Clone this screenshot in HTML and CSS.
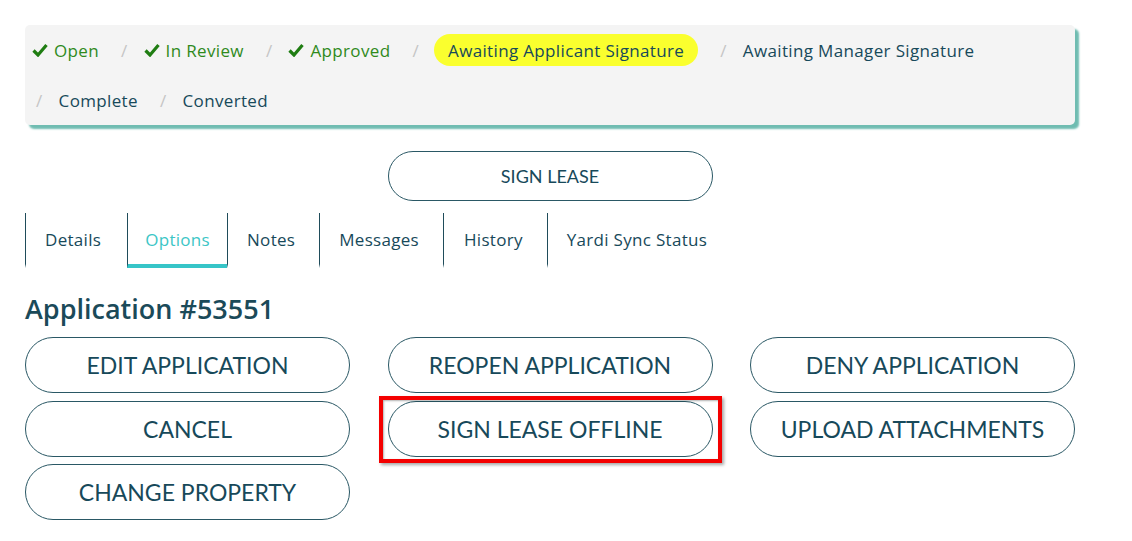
FILE: index.html
```html
<!DOCTYPE html>
<html>
<head>
<meta charset="utf-8">
<link rel="stylesheet" href="styles.css">
</head>
<body>
<div class="page">
  <ol class="steps">
    <li class="step done"><svg class="check" viewBox="0 0 16 14"><path d="M1.5 7.5 L6 12 L14.5 2" /></svg>Open</li>
    <li class="step done"><svg class="check" viewBox="0 0 16 14"><path d="M1.5 7.5 L6 12 L14.5 2" /></svg>In Review</li>
    <li class="step done"><svg class="check" viewBox="0 0 16 14"><path d="M1.5 7.5 L6 12 L14.5 2" /></svg>Approved</li>
    <li class="step current"><span class="pill">Awaiting Applicant Signature</span></li>
    <li class="step">Awaiting Manager Signature</li>
    <li class="step">Complete</li>
    <li class="step">Converted</li>
  </ol>

  <div class="lead-action">
    <button class="btn btn-small">SIGN LEASE</button>
  </div>

  <nav class="tabs">
    <a class="tab">Details</a>
    <a class="tab active">Options</a>
    <a class="tab">Notes</a>
    <a class="tab">Messages</a>
    <a class="tab">History</a>
    <a class="tab">Yardi Sync Status</a>
  </nav>

  <h1 class="title">Application #53551</h1>

  <div class="actions">
    <button class="btn">EDIT APPLICATION</button>
    <button class="btn">REOPEN APPLICATION</button>
    <button class="btn">DENY APPLICATION</button>
    <button class="btn">CANCEL</button>
    <button class="btn marked">SIGN LEASE OFFLINE</button>
    <button class="btn">UPLOAD ATTACHMENTS</button>
    <button class="btn">CHANGE PROPERTY</button>
  </div>
</div>
</body>
</html>
```

FILE: styles.css
```css
* { box-sizing: border-box; }
html, body { margin: 0; padding: 0; background: #fff; }
body {
  font-family: "Open Sans", "Lato", sans-serif;
  color: #17495a;
}
.page {
  width: 1050px;
  margin-left: 25px;
  padding-top: 25px;
}
.steps {
  list-style: none;
  margin: 0;
  padding: 0 7px 0 7px;
  background: #f4f4f4;
  border-radius: 5px;
  box-shadow: 4px 4px 2px #6fbcb1;
  display: flex;
  flex-wrap: wrap;
  align-items: center;
  height: 100px;
  font-size: 17px;
  letter-spacing: 0.35px;
}
.step {
  display: flex;
  align-items: center;
  height: 50px;
  color: #17495a;
}
.step + .step::before {
  content: "/";
  color: #c4c4c4;
  margin: 0 16px 0 22px;
}
.step:nth-child(6)::before { margin-left: 4px; }
.step.done { color: #2f8a1c; }
.check {
  width: 16px;
  height: 14px;
  margin-right: 6px;
  fill: none;
  stroke: #1f7d12;
  stroke-width: 3.2;
}
.pill {
  background: #faff2e;
  border-radius: 16px;
  padding: 0 14px;
  height: 32px;
  display: flex;
  align-items: center;
}
.current::before { margin-right: 15px !important; }

.lead-action {
  display: flex;
  justify-content: center;
  margin-top: 26px;
}
.btn {
  font-family: "Lato", "Open Sans", sans-serif;
  background: #fff;
  color: #17495a;
  border: 1px solid #2a5865;
  border-radius: 28px;
  height: 56px;
  font-size: 23px;
  cursor: pointer;
  padding: 0;
}
.btn-small {
  width: 325px;
  height: 50px;
  border-radius: 25px;
  font-size: 18px;
}

.tabs {
  display: flex;
  margin-top: 12px;
  height: 55px;
}
.tab {
  display: flex;
  align-items: center;
  padding: 1px 20px 0 19px;
  border-left: 1px solid #1f4c5a;
  font-size: 17px;
  letter-spacing: 0.3px;
  color: #17495a;
  border-bottom: 4px solid transparent;
}
.tab.active {
  color: #3cc6c6;
  border-bottom-color: #36c5c8;
  padding-left: 17px;
  padding-right: 17px;
}
.tab:nth-child(1) { padding-right: 26px; }
.tab:nth-child(3), .tab:nth-child(4), .tab:nth-child(5) { padding-right: 24px; }
.tab:nth-child(5) { padding-left: 20px; }

.title {
  font-family: "Open Sans", "Lato", sans-serif;
  font-weight: 600;
  font-size: 27px;
  margin: 23px 0 0 0;
  color: #1b4a59;
  line-height: 36px;
}
.actions {
  display: grid;
  grid-template-columns: repeat(3, 1fr);
  column-gap: 37.5px;
  row-gap: 7.5px;
  margin-top: 10px;
}
.marked { position: relative; }
.marked::after {
  content: "";
  position: absolute;
  left: -10px;
  right: -10px;
  top: -6px;
  bottom: -7px;
  border: 4px solid #f40000;
  box-shadow: 2px 2px 3px rgba(0,0,0,0.35), inset 1px 1px 2px rgba(0,0,0,0.3);
  pointer-events: none;
}
```
